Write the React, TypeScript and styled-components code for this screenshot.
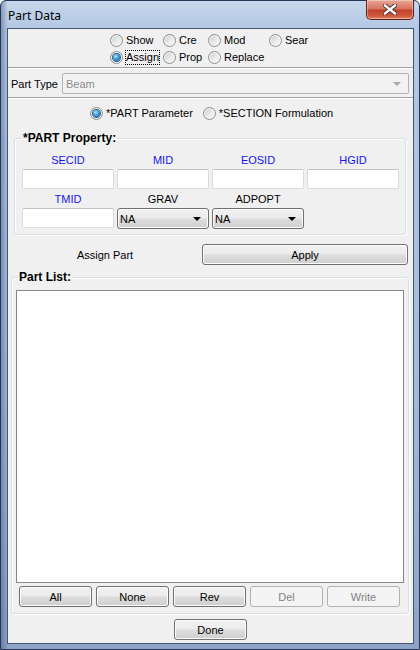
import React from "react";
import styled, { createGlobalStyle } from "styled-components";

const GlobalStyle = createGlobalStyle`
  html, body {
    margin: 0;
    padding: 0;
  }
  body {
    width: 420px;
    height: 650px;
    overflow: hidden;
    background: #ffffff;
    font-family: "Liberation Sans", Arial, sans-serif;
    font-size: 11px;
    color: #000;
  }
  * {
    box-sizing: border-box;
  }
`;

const modes = [
  ["Show", "Cre", "Mod", "Sear"],
  ["Assign", "Prop", "Replace"],
];

const idFields = [
  { label: "SECID", blue: true },
  { label: "MID", blue: true },
  { label: "EOSID", blue: true },
  { label: "HGID", blue: true },
];

const listButtons = [
  { label: "All", disabled: false },
  { label: "None", disabled: false },
  { label: "Rev", disabled: false },
  { label: "Del", disabled: true },
  { label: "Write", disabled: true },
];

const Radio: React.FC<{ label: string; checked?: boolean; focused?: boolean }> = ({
  label,
  checked,
  focused,
}) => (
  <RadioItem>
    <RadioCircle $checked={checked} />
    <RadioText $focused={focused}>{label}</RadioText>
  </RadioItem>
);

const Combo: React.FC<{ value: string }> = ({ value }) => (
  <ComboBox>
    <span>{value}</span>
    <Arrow />
  </ComboBox>
);

const App: React.FC = () => {
  return (
    <>
      <GlobalStyle />
      <Window>
        <TitleBar>
          <Title>Part Data</Title>
          <CloseButton>
            <svg width="14" height="11" viewBox="0 0 14 11">
              <path
                d="M2 1.5 L12 9.5 M12 1.5 L2 9.5"
                stroke="#3a2a28"
                strokeWidth="4.2"
                strokeLinecap="square"
              />
              <path
                d="M2 1.5 L12 9.5 M12 1.5 L2 9.5"
                stroke="#ffffff"
                strokeWidth="2.4"
                strokeLinecap="square"
              />
            </svg>
          </CloseButton>
        </TitleBar>

        <Panel>
          <ModeGrid>
            {modes.map((row, r) =>
              row.map((m) => (
                <Radio
                  key={m}
                  label={m}
                  checked={r === 1 && m === "Assign"}
                  focused={m === "Assign"}
                />
              ))
            )}
          </ModeGrid>
          <Separator />

          <TypeRow>
            <TypeLabel>Part Type</TypeLabel>
            <DisabledCombo>
              <span>Beam</span>
              <Arrow $grey />
            </DisabledCombo>
          </TypeRow>
          <Separator $gap={3} />

          <SectionRow>
            <Radio label="*PART Parameter" checked />
            <Radio label="*SECTION Formulation" />
          </SectionRow>

          <PropertyGroup>
            <GroupTitle>*PART Property:</GroupTitle>
            <FieldGrid>
              {idFields.map((f) => (
                <Field key={f.label}>
                  <FieldLabel $blue={f.blue}>{f.label}</FieldLabel>
                  <TextBox />
                </Field>
              ))}
              <Field>
                <FieldLabel $blue>TMID</FieldLabel>
                <TextBox />
              </Field>
              <Field>
                <FieldLabel>GRAV</FieldLabel>
                <Combo value="NA" />
              </Field>
              <Field>
                <FieldLabel>ADPOPT</FieldLabel>
                <Combo value="NA" />
              </Field>
            </FieldGrid>
          </PropertyGroup>

          <AssignRow>
            <AssignText>Assign Part</AssignText>
            <ApplyButton>Apply</ApplyButton>
          </AssignRow>

          <ListGroup>
            <ListTitle>Part List:</ListTitle>
            <ListBox />
            <ListButtons>
              {listButtons.map((b) => (
                <Button key={b.label} disabled={b.disabled}>
                  {b.label}
                </Button>
              ))}
            </ListButtons>
          </ListGroup>

          <DoneRow>
            <Button>Done</Button>
          </DoneRow>
        </Panel>
      </Window>
    </>
  );
};

const Window = styled.div`
  width: 420px;
  height: 650px;
  display: flex;
  flex-direction: column;
  border: 1px solid #26355a;
  border-radius: 6px 6px 0 0;
  background: linear-gradient(
      90deg,
      rgba(50, 70, 110, 0.4) 0px,
      rgba(60, 80, 120, 0) 7px,
      rgba(60, 80, 120, 0) 100%
    ),
    linear-gradient(180deg, #c6d7ec 0px, #b3c8e3 28px, #a4bad9 60%, #8ea4c6 100%);
`;

const TitleBar = styled.div`
  height: 27px;
  display: flex;
  align-items: flex-start;
  flex: none;
`;

const Title = styled.div`
  padding: 7px 0 0 7px;
  font-family: "Noto Sans", "Liberation Sans", sans-serif;
  font-size: 12px;
  line-height: 16px;
  color: #000;
`;

const CloseButton = styled.div`
  margin: -1px 5px 0 auto;
  width: 48px;
  height: 20px;
  display: flex;
  align-items: center;
  justify-content: center;
  border: 1px solid #5e2217;
  border-top: none;
  border-radius: 0 0 5px 5px;
  background: linear-gradient(180deg, #e8a795 0%, #d87561 45%, #c2432a 55%, #cf5a3e 85%, #e08a6a 100%);
  box-shadow: inset 0 0 0 1px rgba(255, 255, 255, 0.35);
`;

const Panel = styled.div`
  flex: 1;
  min-height: 0;
  margin: 0 5px 5px 6px;
  display: flex;
  flex-direction: column;
  border: 1px solid #46546e;
  background: #f0f0f0;
  padding-bottom: 3px;
`;

const ModeGrid = styled.div`
  display: grid;
  grid-template-columns: 53px 45px 61px 45px;
  grid-auto-rows: 17px;
  justify-content: start;
  padding: 3px 0 0 102px;
`;

const RadioItem = styled.label`
  display: flex;
  align-items: center;
  gap: 3px;
  white-space: nowrap;
`;

const RadioCircle = styled.span<{ $checked?: boolean }>`
  width: 13px;
  height: 13px;
  flex: none;
  border-radius: 50%;
  border: 1px solid #8c8e90;
  background: linear-gradient(135deg, #c9c9c9 0%, #e8e8e8 50%, #fbfbfb 100%);
  box-shadow: inset 0 0 0 1px #f6f6f6;
  display: flex;
  align-items: center;
  justify-content: center;

  &::after {
    content: "";
    display: ${(p) => (p.$checked ? "block" : "none")};
    width: 7px;
    height: 7px;
    border-radius: 50%;
    background: radial-gradient(circle at 40% 35%, #b4ecff 0%, #3a9ad8 45%, #0c4c88 100%);
    box-shadow: 0 0 0 1px #2a5d8c;
  }
`;

const RadioText = styled.span<{ $focused?: boolean }>`
  line-height: 13px;
  outline: ${(p) => (p.$focused ? "1px dotted #000" : "none")};
  outline-offset: 0;
`;

const Separator = styled.div<{ $gap?: number }>`
  height: 2px;
  margin-top: ${(p) => p.$gap ?? 1}px;
  border-top: 1px solid #a0a0a0;
  border-bottom: 1px solid #ffffff;
  flex: none;
`;

const TypeRow = styled.div`
  display: flex;
  align-items: center;
  margin-top: 4px;
  padding: 0 4px 0 3px;
`;

const TypeLabel = styled.span`
  width: 51px;
  flex: none;
`;

const DisabledCombo = styled.div`
  flex: 1;
  height: 21px;
  display: flex;
  align-items: center;
  justify-content: space-between;
  padding: 0 7px 0 3px;
  border: 1px solid #b0b4b8;
  border-radius: 2px;
  background: #f2f2f2;
  color: #8d8d8d;
`;

const Arrow = styled.span<{ $grey?: boolean }>`
  width: 0;
  height: 0;
  border-left: 4px solid transparent;
  border-right: 4px solid transparent;
  border-top: 4px solid ${(p) => (p.$grey ? "#a8a8a8" : "#000")};
`;

const SectionRow = styled.div`
  display: flex;
  justify-content: flex-start;
  gap: 10px;
  height: 17px;
  align-items: center;
  margin-top: 6px;
  padding-left: 82px;
`;

const GroupBox = styled.fieldset`
  margin: 0;
  border: 1px solid #d5dfe5;
  border-radius: 3px;
  box-shadow: inset 1px 1px 0 #ffffff, 1px 1px 0 #ffffff;
  min-width: 0;
`;

const GroupTitle = styled.legend`
  padding: 0 1px;
  margin-left: 0;
  font-size: 12px;
  line-height: 14px;
  font-weight: bold;
  color: #000;
`;

const PropertyGroup = styled(GroupBox)`
  margin: 9px 7px 0 6px;
  padding: 8px 6px 5px 7px;
`;

const FieldGrid = styled.div`
  display: grid;
  grid-template-columns: repeat(4, 1fr);
  column-gap: 3px;
  row-gap: 3px;
`;

const Field = styled.div`
  display: flex;
  flex-direction: column;
  gap: 2px;
`;

const FieldLabel = styled.span<{ $blue?: boolean }>`
  line-height: 14px;
  text-align: center;
  color: ${(p) => (p.$blue ? "#1414f0" : "#000")};
`;

const TextBox = styled.div`
  height: 20px;
  border: 1px solid #d9dbdf;
  border-top-color: #bfc2c7;
  border-radius: 2px;
  background: #ffffff;
`;

const buttonFace = `
  border: 1px solid #707070;
  border-radius: 3px;
  background: linear-gradient(180deg, #f2f2f2 0%, #ebebeb 48%, #dddddd 52%, #cfcfcf 100%);
  box-shadow: inset 0 0 0 1px #fcfcfc;
`;

const ComboBox = styled.div`
  height: 21px;
  display: flex;
  align-items: center;
  justify-content: space-between;
  padding: 0 7px 0 2px;
  ${buttonFace}
`;

const AssignRow = styled.div`
  display: flex;
  align-items: center;
  margin-top: 9px;
  padding-right: 5px;
`;

const AssignText = styled.span`
  flex: 1;
  text-align: center;
`;

const Button = styled.button`
  width: 73px;
  height: 21px;
  padding: 0;
  font-family: "Liberation Sans", Arial, sans-serif;
  font-size: 11px;
  color: #000;
  ${buttonFace}

  &:disabled {
    border-color: #adb2b5;
    background: #f4f4f4;
    box-shadow: none;
    color: #838383;
  }
`;

const ApplyButton = styled(Button)`
  width: 206px;
`;

const ListGroup = styled(GroupBox)`
  flex: 1;
  min-height: 0;
  display: flex;
  flex-direction: column;
  margin: 5px 4px 0 3px;
  padding: 6px 4px 6px 4px;
`;

const ListTitle = styled(GroupTitle)`
  margin-left: 2px;
`;

const ListBox = styled.div`
  flex: 1;
  min-height: 0;
  border: 1px solid #828790;
  background: #ffffff;
`;

const ListButtons = styled.div`
  display: flex;
  gap: 4px;
  margin-top: 3px;
  padding-left: 3px;
`;

const DoneRow = styled.div`
  display: flex;
  justify-content: center;
  margin-top: 5px;
`;

export default App;
